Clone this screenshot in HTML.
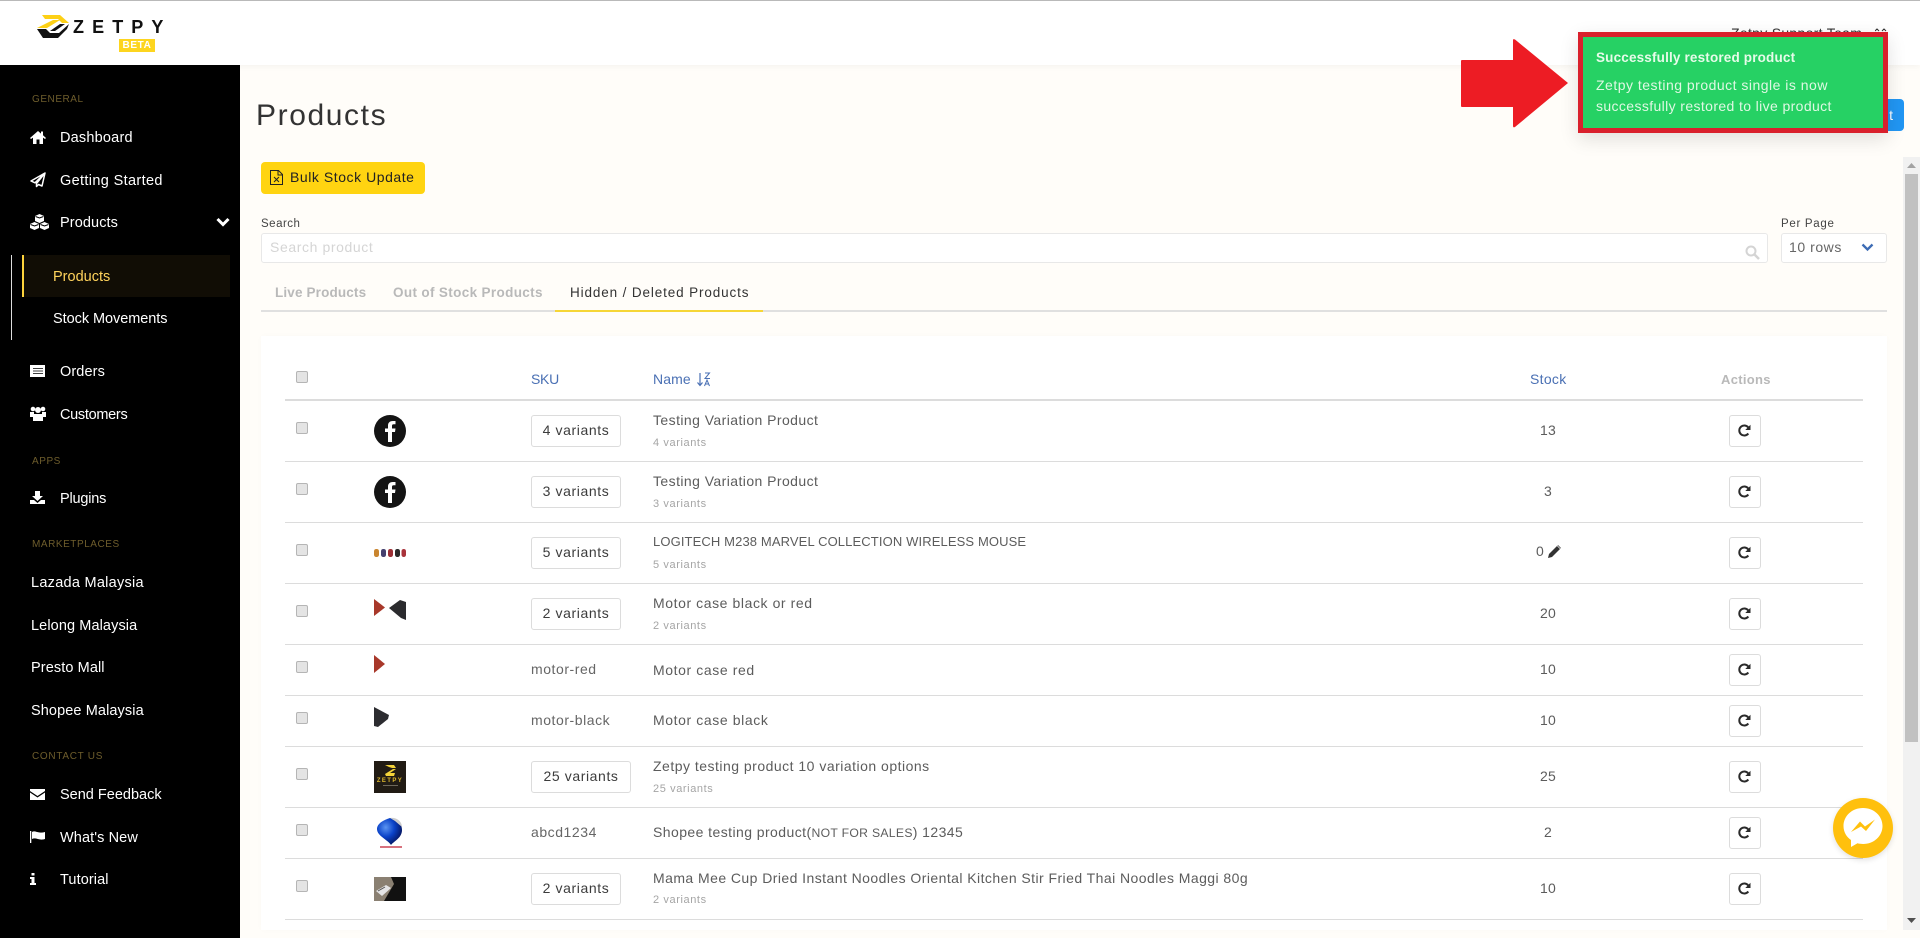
<!DOCTYPE html>
<html><head><meta charset="utf-8"><title>Products</title>
<style>
html,body{margin:0;padding:0;width:1920px;height:938px;overflow:hidden;background:#fffdf9;font-family:"Liberation Sans",sans-serif}
#p{position:relative;width:1920px;height:938px;overflow:hidden}
#p div,#p span,#p svg{position:absolute}
.t{white-space:nowrap;line-height:20px;height:20px}
.s{color:#fff;font-size:14.5px;letter-spacing:.1px;margin-top:1px}
.h{color:#6e5d2c;font-size:10px;letter-spacing:.55px;margin-top:2px}
.n{color:#5c5c5c;font-size:14px;letter-spacing:.43px}
.v{color:#a5a5a5;font-size:11px;letter-spacing:.6px;margin-top:1px}
.q{color:#5c5c5c;font-size:14px;width:60px;text-align:center;left:1518px;letter-spacing:.2px}
.b{left:531px;width:88px;height:30px;border:1px solid #dcdcdc;border-radius:3px;background:#fff;color:#3c3c3c;font-size:14px;line-height:29px;text-align:center;letter-spacing:.6px}
.a{left:1729px;width:30px;height:30px;border:1px solid #dcdcdc;border-radius:3px;background:#fff}
.l{left:285px;width:1578px;height:1px;background:#dcdcdc}
.c{left:296px;width:10px;height:10px;border:1px solid #b5b5b5;border-radius:2px;background:#e4e4e4}
.k{color:#666;font-size:14px;left:531px;letter-spacing:.55px}
.th{color:#4a70b4;font-size:14px;letter-spacing:.3px;top:369px}
.tab{font-size:13.5px;font-weight:bold;letter-spacing:.15px;top:283px;color:#b9b9b9}
</style></head><body><div id="p">

<!-- header -->
<div style="left:0;top:0;width:1920px;height:65px;background:#fff;box-shadow:0 2px 6px rgba(0,0,0,.04)"></div>
<div style="left:0;top:0;width:1920px;height:1px;background:#b9b9b9"></div>
<svg style="left:34px;top:12px" width="38" height="28" viewBox="0 0 38 28"><path d="M8 3H26L35 11H28L24 7H11ZM3 16L19 8H26L13 16Z" fill="#fdd015"/><path d="M3 17H12L16 21H25L35 12L33 17L24 26H9ZM16 19L26 12H31L21 19Z" fill="#111"/></svg>
<span class="t" style="left:73px;top:16px;font-size:18px;font-weight:bold;color:#111;letter-spacing:8.1px;line-height:22px;height:22px">ZETPY</span>
<div style="left:119px;top:39px;width:36px;height:13px;background:#fdd51f;color:#fff;font-size:10px;font-weight:bold;text-align:center;line-height:13px;letter-spacing:.6px">BETA</div>
<span class="t" style="left:1731px;top:23px;font-size:14px;color:#333;letter-spacing:.3px">Zetpy Support Team</span>
<svg style="left:1875px;top:28px" width="12" height="4" viewBox="0 0 12 4"><path d="M0 3L2 1L4 3M7 3L9 1L11 3" stroke="#333" fill="none"/></svg>

<!-- sidebar -->
<div style="left:0;top:65px;width:240px;height:873px;background:#000"></div>
<span class="t h" style="left:32px;top:88px">GENERAL</span>
<svg style="left:30px;top:130px" width="16" height="14" viewBox="0 0 16 14"><path d="M8 1L0 8L1 9L3 7.6V14H6.500V9.500H9.500V14H13V7.6L15 9L16 8L13 5.3V1.500H11V3.6Z" fill="#fff"/></svg>
<span class="t s" style="left:60px;top:127px;letter-spacing:.2px">Dashboard</span>
<svg style="left:30px;top:172px" width="16" height="16" viewBox="0 0 16 16"><path d="M15 1L1 9L5 10.800L15 1ZM15 1L6.500 11.500V14.500L8.500 12.500L12 14Z" fill="#000" stroke="#fff" stroke-width="1.500" stroke-linejoin="round"/></svg>
<span class="t s" style="left:60px;top:170px;letter-spacing:.35px">Getting Started</span>
<svg style="left:30px;top:214px" width="19" height="16" viewBox="0 0 19 16"><path d="M9.500 0L14 2V7L9.500 9L5 7V2ZM4.500 8L9 10V14L4.500 16L0 14V10ZM14.500 8L19 10V14L14.500 16L10 14V10Z" fill="#fff"/><path d="M5.500 2.500L9.500 4L13.500 2.500M0.500 10.500L4.500 12L8.500 10.500M10.500 10.500L14.500 12L18.500 10.500" stroke="#000" fill="none"/></svg>
<span class="t s" style="left:60px;top:212px">Products</span>
<svg style="left:216px;top:217px" width="14" height="10" viewBox="0 0 14 10"><path d="M1.500 2L7 7.500L12.500 2" stroke="#fff" stroke-width="3" fill="none"/></svg>
<div style="left:11px;top:255px;width:1px;height:85px;background:#ddd"></div>
<div style="left:22px;top:255px;width:208px;height:42px;background:#110d05"></div>
<div style="left:22px;top:255px;width:2px;height:42px;background:#fdd33c"></div>
<span class="t s" style="left:53px;top:266px;color:#ffd35c;letter-spacing:0">Products</span>
<span class="t s" style="left:53px;top:308px;letter-spacing:-.05px">Stock Movements</span>
<svg style="left:30px;top:365px" width="15" height="12" viewBox="0 0 15 12"><path d="M0 0H15V12H0Z" fill="#fff"/><path d="M3 3.500H13M3 6H13M3 8.500H13" stroke="#000" stroke-width=".8"/></svg>
<span class="t s" style="left:60px;top:361px">Orders</span>
<svg style="left:30px;top:406px" width="16" height="15" viewBox="0 0 16 15"><circle cx="3" cy="3" r="2.300" fill="#fff"/><circle cx="13" cy="3" r="2.300" fill="#fff"/><circle cx="8" cy="4" r="3" fill="#fff"/><path d="M0 6H4L4 11H0ZM12 6H16V11H12ZM4 8H12L13 10V15H3V10Z" fill="#fff"/></svg>
<span class="t s" style="left:60px;top:404px;letter-spacing:-.3px">Customers</span>
<span class="t h" style="left:32px;top:450px">APPS</span>
<svg style="left:30px;top:491px" width="15" height="13" viewBox="0 0 15 13"><path d="M5 0H10V5H13L7.500 10L2 5H5ZM0 9H4L7.500 12L11 9H15V13H0Z" fill="#fff"/></svg>
<span class="t s" style="left:60px;top:488px;letter-spacing:-.2px">Plugins</span>
<span class="t h" style="left:32px;top:533px">MARKETPLACES</span>
<span class="t s" style="left:31px;top:572px;letter-spacing:.27px">Lazada Malaysia</span>
<span class="t s" style="left:31px;top:615px">Lelong Malaysia</span>
<span class="t s" style="left:31px;top:657px">Presto Mall</span>
<span class="t s" style="left:31px;top:700px">Shopee Malaysia</span>
<span class="t h" style="left:32px;top:745px;letter-spacing:.7px">CONTACT US</span>
<svg style="left:30px;top:789px" width="15" height="11" viewBox="0 0 15 11"><path d="M0 0H15V2L7.500 7L0 2ZM0 3.500L7.500 8.500L15 3.500V11H0Z" fill="#fff"/></svg>
<span class="t s" style="left:60px;top:784px;letter-spacing:0">Send Feedback</span>
<svg style="left:30px;top:831px" width="15" height="12" viewBox="0 0 15 12"><path d="M0 0H1.300V12H0ZM2 1C5 -1 8 3 15 1V8C9 10 6 6 2 8Z" fill="#fff"/></svg>
<span class="t s" style="left:60px;top:827px">What's New</span>
<svg style="left:30px;top:873px" width="6" height="12" viewBox="0 0 6 12"><path d="M1.500 0H4.500V2.500H1.500ZM0 4H4.500V10H6V12H0V10H1.500V6H0Z" fill="#fff"/></svg>
<span class="t s" style="left:60px;top:869px">Tutorial</span>

<!-- top content -->
<span class="t" style="left:256px;top:96px;font-size:30px;line-height:40px;height:40px;color:#333;letter-spacing:1.6px">Products</span>
<div style="left:261px;top:162px;width:164px;height:32px;background:#ffd411;border-radius:4px"></div>
<svg style="left:270px;top:170px" width="13" height="15" viewBox="0 0 13 15"><path d="M.5.500H8.500L12.500 4.500V14.500H.5ZM8 .5V5H12.500" fill="none" stroke="#222"/><path d="M4 7L9 12M9 7L4 12" stroke="#222"/></svg>
<span class="t" style="left:290px;top:167px;font-size:14px;color:#222;letter-spacing:.55px">Bulk Stock Update</span>
<span class="t" style="left:261px;top:214px;font-size:11.500px;color:#444;letter-spacing:.5px">Search</span>
<div style="left:261px;top:233px;width:1505px;height:28px;background:#fff;border:1px solid #e8e8e8;border-radius:3px"></div>
<span class="t" style="left:270px;top:237px;font-size:14px;color:#d5d5d5;letter-spacing:.6px">Search product</span>
<svg style="left:1745px;top:245px" width="15" height="15" viewBox="0 0 15 15"><circle cx="6" cy="6" r="4.500" fill="none" stroke="#d4d4d4" stroke-width="2"/><path d="M9.500 9.500L14 14" stroke="#d4d4d4" stroke-width="2.500"/></svg>
<span class="t" style="left:1781px;top:214px;font-size:11.500px;color:#444;letter-spacing:.7px">Per Page</span>
<div style="left:1781px;top:233px;width:104px;height:28px;background:#fff;border:1px solid #e8e8e8;border-radius:3px"></div>
<span class="t" style="left:1789px;top:237px;font-size:14px;color:#666;letter-spacing:.55px">10 rows</span>
<svg style="left:1861px;top:243px" width="13" height="9" viewBox="0 0 13 9"><path d="M1.500 1.500L6.500 6.500L11.500 1.500" stroke="#3d6cb5" stroke-width="2.300" fill="none"/></svg>
<span class="t tab" style="left:275px">Live Products</span>
<span class="t tab" style="left:393px;letter-spacing:.35px">Out of Stock Products</span>
<span class="t tab" style="left:570px;color:#333;font-weight:normal;letter-spacing:.87px">Hidden / Deleted Products</span>
<div style="left:261px;top:310px;width:1626px;height:2px;background:#e0e0e0"></div>
<div style="left:555px;top:310px;width:208px;height:2px;background:#f6d637"></div>

<!-- blue button behind toast -->
<div style="left:1840px;top:99px;width:64px;height:32px;background:#2196f3;border-radius:4px;color:#fff;font-size:14px;line-height:32px;text-align:right;box-sizing:border-box;padding-right:11px">t</div>

<!-- card -->
<div style="left:261px;top:336px;width:1626px;height:594px;background:#fff;box-shadow:0 0 6px rgba(0,0,0,.02)"></div>
<div class="c" style="top:371px"></div>
<span class="t th" style="left:531px;letter-spacing:-.3px">SKU</span>
<span class="t th" style="left:653px;letter-spacing:.1px">Name</span>
<svg style="left:697px;top:372px" width="14" height="15" viewBox="0 0 14 15"><path d="M3 1V13M.5 10.500L3 13.500L5.500 10.500" stroke="#4a70b4" fill="none" stroke-width="1.200"/><path d="M8 1H12.500L8 6.500H13M7.500 14L10 8L12.500 14M8.500 12H11.500" stroke="#4a70b4" fill="none"/></svg>
<span class="t th" style="left:1530px">Stock</span>
<span class="t th" style="left:1721px;top:370px;color:#b9b9b9;font-weight:bold;font-size:13px">Actions</span>
<div class="l" style="top:399px;height:2px"></div>
<div class="l" style="top:461px"></div><div class="l" style="top:522px"></div><div class="l" style="top:583px"></div><div class="l" style="top:644px"></div><div class="l" style="top:695px"></div><div class="l" style="top:746px"></div><div class="l" style="top:807px"></div><div class="l" style="top:858px"></div><div class="l" style="top:919px"></div>

<div class="c" style="top:422px"></div><div class="c" style="top:483px"></div><div class="c" style="top:544px"></div><div class="c" style="top:605px"></div><div class="c" style="top:661px"></div><div class="c" style="top:712px"></div><div class="c" style="top:768px"></div><div class="c" style="top:824px"></div><div class="c" style="top:880px"></div>

<!-- thumbs -->
<svg style="left:374px;top:415px" width="32" height="32" viewBox="0 0 32 32"><circle cx="16" cy="16" r="16" fill="#141414"/><path d="M18 27V17H21L21.500 13.500H18V11C18 9.800 18.500 9.300 19.700 9.300H21.500V6H18.800C15.500 6 14 8 14 10.500V13.500H11V17H14V27Z" fill="#fff"/></svg>
<svg style="left:374px;top:476px" width="32" height="32" viewBox="0 0 32 32"><circle cx="16" cy="16" r="16" fill="#141414"/><path d="M18 27V17H21L21.500 13.500H18V11C18 9.800 18.500 9.300 19.700 9.300H21.500V6H18.800C15.500 6 14 8 14 10.500V13.500H11V17H14V27Z" fill="#fff"/></svg>
<svg style="left:374px;top:549px" width="32" height="9" viewBox="0 0 32 9"><rect x="0" y="0" width="5" height="8" rx="2.200" fill="#c9852f"/><rect x="7" y="0" width="5" height="8" rx="2.200" fill="#45406e"/><rect x="14" y="0" width="5" height="8" rx="2.200" fill="#9c2f35"/><rect x="21" y="0" width="5" height="8" rx="2.200" fill="#2a2a2a"/><rect x="27.500" y="0" width="4.500" height="8" rx="2.200" fill="#a8323a"/></svg>
<svg style="left:374px;top:598px" width="32" height="23" viewBox="0 0 32 23"><path d="M0 1L11 9.500L0 18Z" fill="#a8382a"/><path d="M15 10L26 2L32 4V22L27 20Z" fill="#2b2b2e"/></svg>
<svg style="left:374px;top:655px" width="12" height="18" viewBox="0 0 12 18"><path d="M0 0L11 9L0 18Z" fill="#a8382a"/></svg>
<svg style="left:374px;top:707px" width="16" height="21" viewBox="0 0 16 21"><path d="M0 0L15 8L14 12L4 20L0 19Z" fill="#2c2c30"/></svg>
<svg style="left:374px;top:761px" width="32" height="32" viewBox="0 0 32 32"><rect width="32" height="32" fill="#211b14"/><path d="M11 4H20L22 7H18L15 6ZM11 13L19 8H22L16 12H21L20 15H12Z" fill="#f3d23a"/><text x="16" y="21" text-anchor="middle" font-family="Liberation Sans,sans-serif" font-size="6" font-weight="bold" letter-spacing="1.400" fill="#e0b92c">ZETPY</text><path d="M9 24H24V25H9Z" fill="#6e675a"/></svg>
<svg style="left:377px;top:817px" width="26" height="32" viewBox="0 0 26 32"><defs><radialGradient id="g" cx=".35" cy=".35" r=".7"><stop offset="0" stop-color="#5b94f2"/><stop offset=".5" stop-color="#0a42c8"/><stop offset="1" stop-color="#04135c"/></radialGradient></defs><path d="M13 1C18 1 25 5 25 13C25 21 17 24 14 28C11 23 0 19 0 12C0 7 6 3 13 1Z" fill="url(#g)"/><path d="M13 1C19 0 25 4 25 10L18 4Z" fill="#ccc"/><path d="M3 29H25V31H3Z" fill="#d8727e"/></svg>
<svg style="left:374px;top:877px" width="32" height="24" viewBox="0 0 32 24"><rect width="32" height="24" fill="#111"/><path d="M0 0H17L20 7L10 24H0Z" fill="#8a8072"/><path d="M2 14L12 8L17 11L8 19Z" fill="#e4e4e6"/><path d="M4 14L11 10" stroke="#555"/></svg>

<!-- variant buttons / sku -->
<div class="b" style="top:415px">4 variants</div>
<div class="b" style="top:476px">3 variants</div>
<div class="b" style="top:537px">5 variants</div>
<div class="b" style="top:598px">2 variants</div>
<span class="t k" style="top:659px">motor-red</span>
<span class="t k" style="top:710px">motor-black</span>
<div class="b" style="top:761px;width:98px">25 variants</div>
<span class="t k" style="top:822px">abcd1234</span>
<div class="b" style="top:873px">2 variants</div>

<!-- names -->
<span class="t n" style="left:653px;top:410px">Testing Variation Product</span><span class="t v" style="left:653px;top:432px">4 variants</span>
<span class="t n" style="left:653px;top:471px">Testing Variation Product</span><span class="t v" style="left:653px;top:493px">3 variants</span>
<span class="t n" style="left:653px;top:532px;font-size:13px;letter-spacing:.12px">LOGITECH M238 MARVEL COLLECTION WIRELESS MOUSE</span><span class="t v" style="left:653px;top:554px">5 variants</span>
<span class="t n" style="left:653px;top:593px;letter-spacing:.58px">Motor case black or red</span><span class="t v" style="left:653px;top:615px">2 variants</span>
<span class="t n" style="left:653px;top:660px;letter-spacing:.6px">Motor case red</span>
<span class="t n" style="left:653px;top:710px;letter-spacing:.6px">Motor case black</span>
<span class="t n" style="left:653px;top:756px;letter-spacing:.49px">Zetpy testing product 10 variation options</span><span class="t v" style="left:653px;top:778px">25 variants</span>
<span class="t n" style="left:653px;top:822px">Shopee testing product(<b style="font-weight:normal;font-size:12.2px;letter-spacing:.3px">NOT FOR SALES</b>) 12345</span>
<span class="t n" style="left:653px;top:868px;letter-spacing:.44px">Mama Mee Cup Dried Instant Noodles Oriental Kitchen Stir Fried Thai Noodles Maggi 80g</span><span class="t v" style="left:653px;top:889px">2 variants</span>

<!-- stock -->
<span class="t q" style="top:420px">13</span>
<span class="t q" style="top:481px">3</span>
<span class="t" style="left:1536px;top:541px;color:#5c5c5c;font-size:14px">0</span>
<svg style="left:1548px;top:545px" width="13" height="13" viewBox="0 0 13 13"><path d="M0 13L1 9L9 1L12 4L4 12ZM10 0L13 3L12.500 3.500L9.500 .5Z" fill="#333"/></svg>
<span class="t q" style="top:603px">20</span>
<span class="t q" style="top:659px">10</span>
<span class="t q" style="top:710px">10</span>
<span class="t q" style="top:766px">25</span>
<span class="t q" style="top:822px">2</span>
<span class="t q" style="top:878px">10</span>

<!-- action buttons -->
<div class="a" style="top:415px"><svg style="left:8px;top:8px" width="13" height="13" viewBox="0 0 13 13"><path d="M10.300 9.500A5 5 0 1 1 10.300 3.500" fill="none" stroke="#2a2a2a" stroke-width="2"/><path d="M12.500 .8V6H7.300Z" fill="#2a2a2a"/></svg></div>
<div class="a" style="top:476px"><svg style="left:8px;top:8px" width="13" height="13" viewBox="0 0 13 13"><path d="M10.300 9.500A5 5 0 1 1 10.300 3.500" fill="none" stroke="#2a2a2a" stroke-width="2"/><path d="M12.500 .8V6H7.300Z" fill="#2a2a2a"/></svg></div>
<div class="a" style="top:537px"><svg style="left:8px;top:8px" width="13" height="13" viewBox="0 0 13 13"><path d="M10.300 9.500A5 5 0 1 1 10.300 3.500" fill="none" stroke="#2a2a2a" stroke-width="2"/><path d="M12.500 .8V6H7.300Z" fill="#2a2a2a"/></svg></div>
<div class="a" style="top:598px"><svg style="left:8px;top:8px" width="13" height="13" viewBox="0 0 13 13"><path d="M10.300 9.500A5 5 0 1 1 10.300 3.500" fill="none" stroke="#2a2a2a" stroke-width="2"/><path d="M12.500 .8V6H7.300Z" fill="#2a2a2a"/></svg></div>
<div class="a" style="top:654px"><svg style="left:8px;top:8px" width="13" height="13" viewBox="0 0 13 13"><path d="M10.300 9.500A5 5 0 1 1 10.300 3.500" fill="none" stroke="#2a2a2a" stroke-width="2"/><path d="M12.500 .8V6H7.300Z" fill="#2a2a2a"/></svg></div>
<div class="a" style="top:705px"><svg style="left:8px;top:8px" width="13" height="13" viewBox="0 0 13 13"><path d="M10.300 9.500A5 5 0 1 1 10.300 3.500" fill="none" stroke="#2a2a2a" stroke-width="2"/><path d="M12.500 .8V6H7.300Z" fill="#2a2a2a"/></svg></div>
<div class="a" style="top:761px"><svg style="left:8px;top:8px" width="13" height="13" viewBox="0 0 13 13"><path d="M10.300 9.500A5 5 0 1 1 10.300 3.500" fill="none" stroke="#2a2a2a" stroke-width="2"/><path d="M12.500 .8V6H7.300Z" fill="#2a2a2a"/></svg></div>
<div class="a" style="top:817px"><svg style="left:8px;top:8px" width="13" height="13" viewBox="0 0 13 13"><path d="M10.300 9.500A5 5 0 1 1 10.300 3.500" fill="none" stroke="#2a2a2a" stroke-width="2"/><path d="M12.500 .8V6H7.300Z" fill="#2a2a2a"/></svg></div>
<div class="a" style="top:873px"><svg style="left:8px;top:8px" width="13" height="13" viewBox="0 0 13 13"><path d="M10.300 9.500A5 5 0 1 1 10.300 3.500" fill="none" stroke="#2a2a2a" stroke-width="2"/><path d="M12.500 .8V6H7.300Z" fill="#2a2a2a"/></svg></div>

<!-- scrollbar -->
<div style="left:1903px;top:157px;width:17px;height:773px;background:#f1f1f1"></div>
<div style="left:1905px;top:174px;width:13px;height:568px;background:#c1c1c1"></div>
<svg style="left:1906px;top:163px" width="11" height="6" viewBox="0 0 11 6"><path d="M5.500 0L10 5H1Z" fill="#a3a3a3"/></svg>
<svg style="left:1906px;top:918px" width="11" height="6" viewBox="0 0 11 6"><path d="M1 0H10L5.500 5Z" fill="#505050"/></svg>

<!-- messenger -->
<div style="left:1833px;top:798px;width:60px;height:60px;background:#ffc00d;border-radius:50%;box-shadow:0 2px 6px rgba(0,0,0,.12)"></div>
<svg style="left:1842px;top:807px" width="42" height="42" viewBox="0 0 42 42"><path d="M21 1C10 1 1.500 9 1.500 19C1.500 25 4.500 30 9 33V40L15.500 36.300C17.300 36.800 19 37 21 37C32 37 40.500 29 40.500 19C40.500 9 32 1 21 1Z" fill="#fff"/><path d="M9 25L18 14.500L23 19.500L33 12.500L24 24L19 19.500Z" fill="#ffc00d"/></svg>

<!-- toast -->
<div style="left:1578px;top:32px;width:300px;height:91px;border:5px solid #d9202c;background:#26d164;box-shadow:0 6px 18px rgba(0,0,0,.12)"></div>
<span class="t" style="left:1596px;top:48px;font-size:13.500px;font-weight:bold;color:#e6fbe9;letter-spacing:.17px">Successfully restored product</span>
<span class="t" style="left:1596px;top:75px;font-size:14px;color:#dff8e3;letter-spacing:.49px">Zetpy testing product single is now</span>
<span class="t" style="left:1596px;top:96px;font-size:14px;color:#dff8e3;letter-spacing:.38px">successfully restored to live product</span>

<!-- arrow -->
<svg style="left:1460px;top:38px" width="110" height="91" viewBox="0 0 110 91"><path d="M2 22H53V2Q53 .500 55 1.500L108 45L55 89Q53 90 53 88V69H2Q1 69 1 68V23Q1 22 2 22Z" fill="#ed1c24"/></svg>
</div></body></html>
